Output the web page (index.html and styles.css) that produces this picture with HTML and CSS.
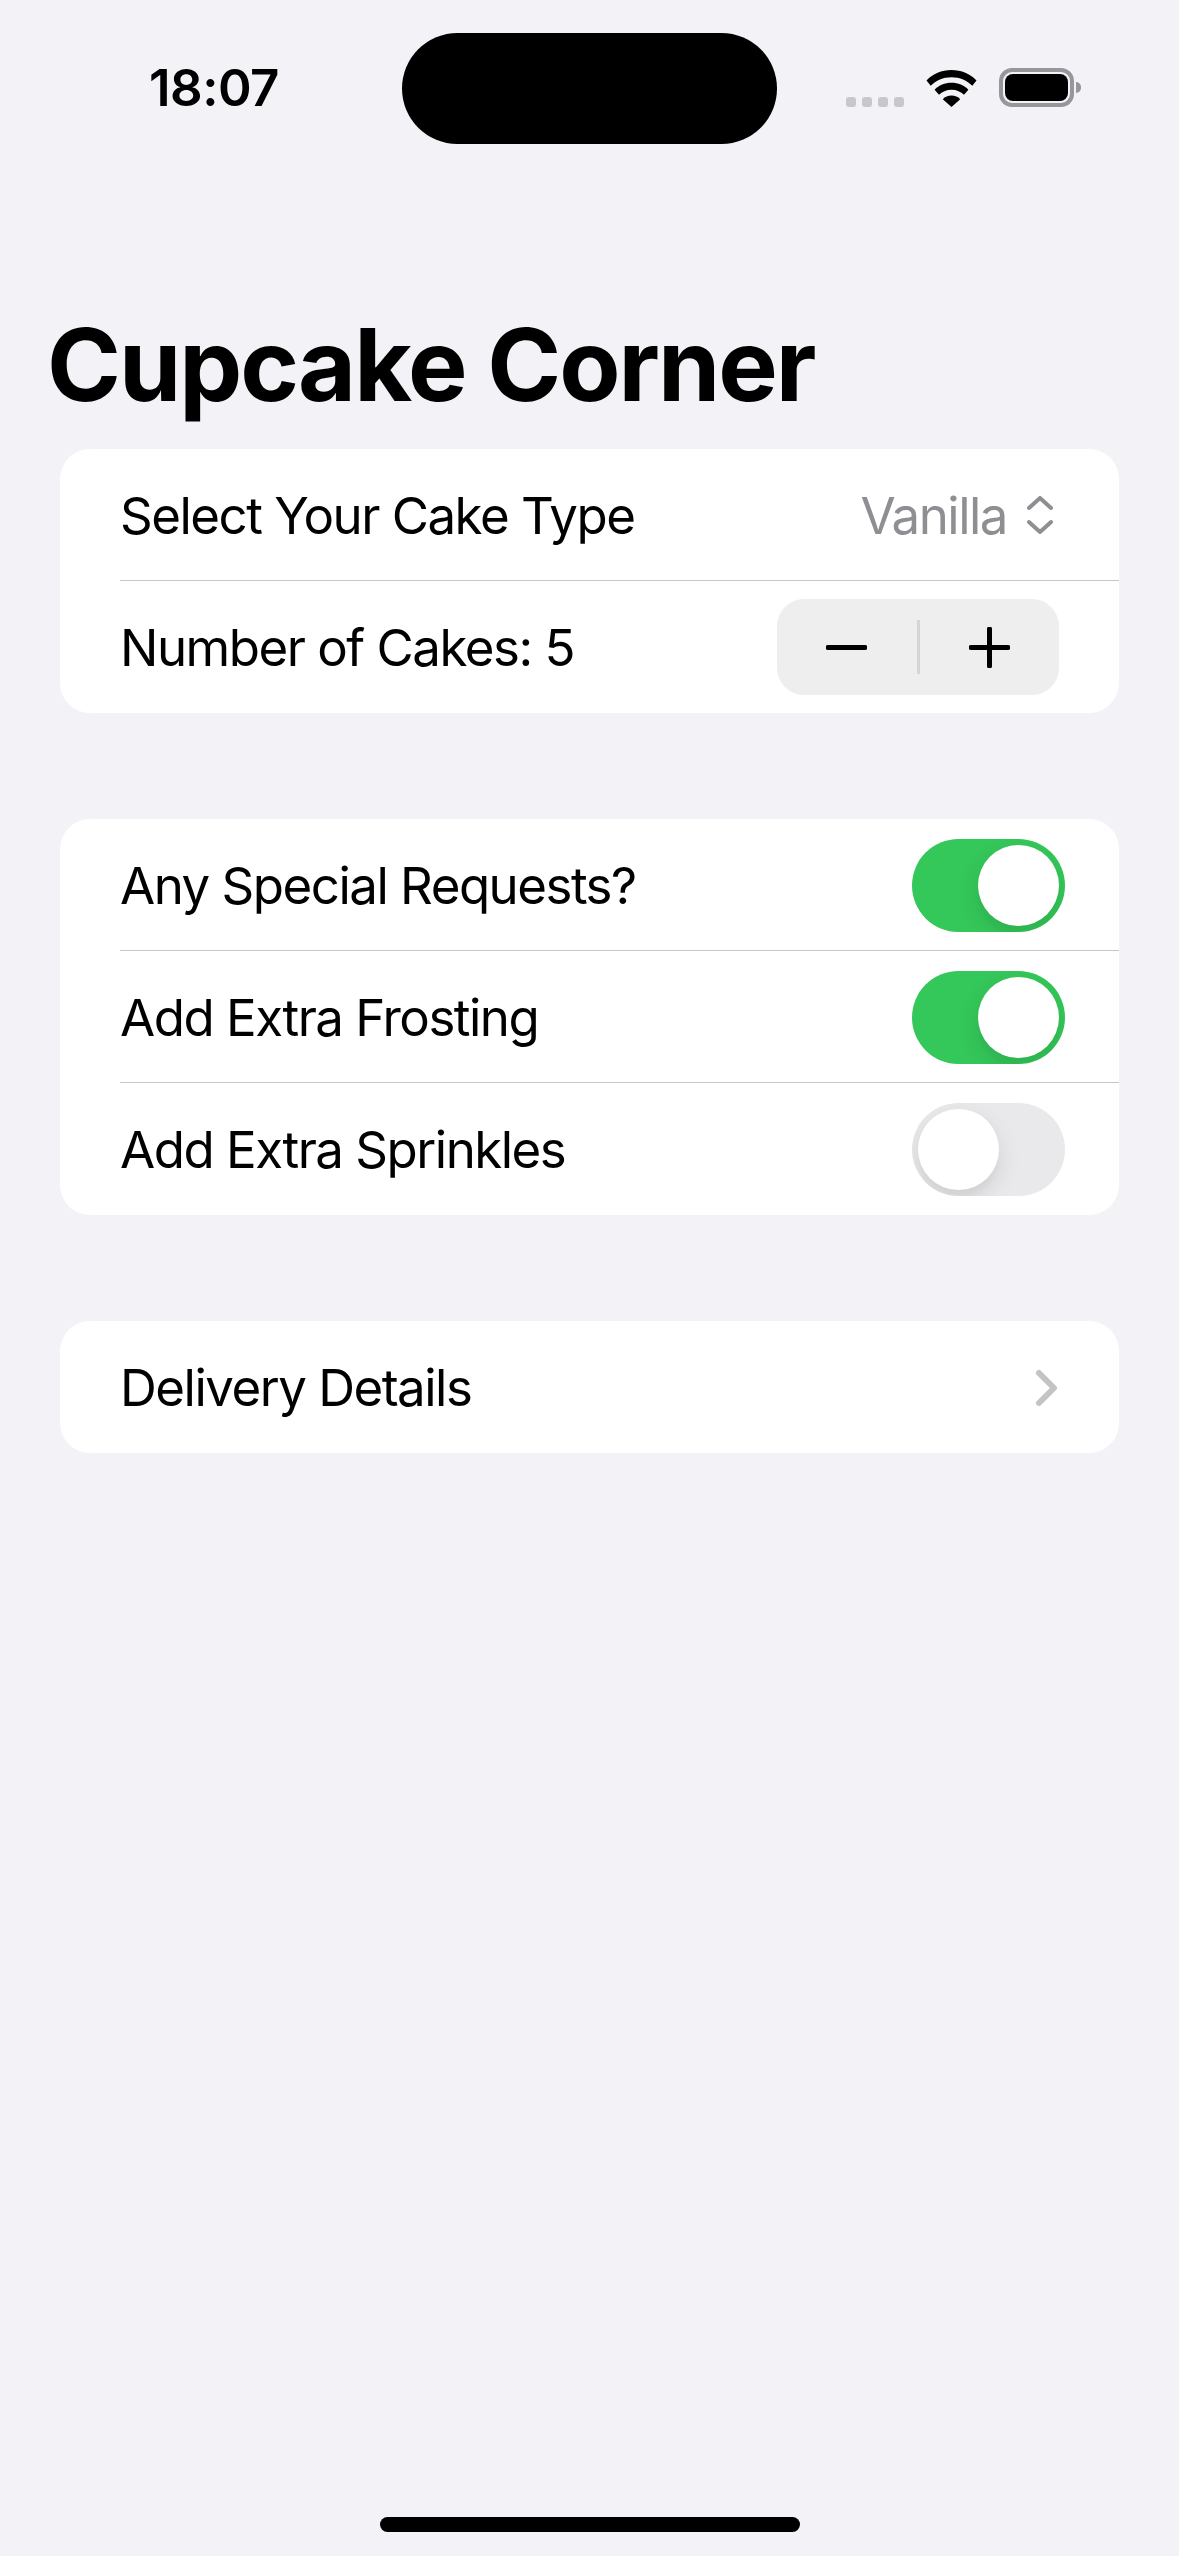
FILE: index.html
```html
<!DOCTYPE html>
<html lang="en">
<head>
<meta charset="utf-8">
<title>Cupcake Corner</title>
<link rel="stylesheet" href="styles.css">
</head>
<body>
<div class="screen">
  <div class="island"></div>
  <header class="status">
    <span class="time">18:07</span>
    <div class="status-icons">
      <div class="signal"><i></i><i></i><i></i><i></i></div>
      <svg class="wifi" viewBox="0 0 51 38" width="51" height="38">
        <path d="M0.500 11.500C7 4.800 15.500 1 25.500 1S44 4.800 50.500 11.500L46.300 16.800C41 11.400 34 8.200 25.500 8.200S10 11.400 4.700 16.800Z"/>
        <path d="M8.600 20.700C12.900 16.400 18.800 13.800 25.500 13.800S38.100 16.400 42.400 20.700L38 25.800C35 22.800 30.600 20.800 25.500 20.800S16 22.800 13 25.800Z"/>
        <path d="M16.800 30.200C19 28 22 26.600 25.500 26.600S32 28 34.200 30.200L25.500 38Z"/>
      </svg>
      <div class="battery"><div class="battery-fill"></div></div>
    </div>
  </header>

  <h1 class="title">Cupcake Corner</h1>

  <section class="card">
    <div class="row">
      <span>Select Your Cake Type</span>
      <div class="picker">
        <span class="picker-value">Vanilla</span>
        <svg class="updown" viewBox="0 0 26 38" width="26" height="38">
          <path d="M2 12L13 2L24 12M2 26L13 36L24 26"/>
        </svg>
      </div>
    </div>
    <div class="row">
      <span>Number of Cakes: 5</span>
      <div class="stepper">
        <svg class="step-icon" viewBox="0 0 41 41" width="41" height="41"><path d="M2 20.500H39"/></svg>
        <div class="step-divider"></div>
        <svg class="step-icon" viewBox="0 0 41 41" width="41" height="41"><path d="M2 20.500H39M20.500 2V39"/></svg>
      </div>
    </div>
  </section>

  <section class="card">
    <div class="row">
      <span>Any Special Requests?</span>
      <div class="toggle on"><div class="knob"></div></div>
    </div>
    <div class="row">
      <span>Add Extra Frosting</span>
      <div class="toggle on"><div class="knob"></div></div>
    </div>
    <div class="row">
      <span>Add Extra Sprinkles</span>
      <div class="toggle"><div class="knob"></div></div>
    </div>
  </section>

  <section class="card">
    <div class="row">
      <span>Delivery Details</span>
      <svg class="chevron" viewBox="0 0 23 38" width="23" height="38"><path d="M4 4L19 19L4 34"/></svg>
    </div>
  </section>

  <div class="home-indicator"></div>
</div>
</body>
</html>
```
FILE: styles.css
```css
* { box-sizing: border-box; }
html, body { margin: 0; padding: 0; }
body {
  background: #f2f2f7;
  font-family: Inter, "Liberation Sans", sans-serif;
  color: #000;
}
.screen {
  position: relative;
  width: 1179px;
  height: 2556px;
  overflow: hidden;
  display: flex;
  flex-direction: column;
  padding: 0 60px;
}
.island {
  position: absolute;
  left: 402px;
  top: 33px;
  width: 375px;
  height: 111px;
  border-radius: 56px;
  background: #000;
}
.status {
  height: 144px;
  margin: 0 -60px;
  padding: 68px 105px 0 149px;
  display: flex;
  justify-content: space-between;
  align-items: flex-start;
}
.time {
  font-size: 51px;
  line-height: 40px;
  font-weight: 600;
  letter-spacing: -0.5px;
}
.status-icons {
  display: flex;
  align-items: flex-end;
  height: 39px;
}
.signal {
  display: flex;
  gap: 6px;
  margin-right: 22px;
}
.signal i {
  width: 10px;
  height: 10px;
  border-radius: 3px;
  background: #c7c7cc;
}
.wifi { fill: #000; margin-right: 22px; }
.battery {
  position: relative;
  width: 75px;
  height: 39px;
  border: 4px solid #97979b;
  border-radius: 13px;
  padding: 2px;
}
.battery::after {
  content: "";
  position: absolute;
  left: 73px;
  top: 10px;
  width: 5px;
  height: 11px;
  border-radius: 0 6px 6px 0;
  background: #97979b;
}
.battery-fill {
  height: 100%;
  border-radius: 8px;
  background: #000;
}
.title {
  margin: 161px 0 0 -13px;
  height: 144px;
  font-size: 100px;
  line-height: 120px;
  font-weight: 700;
  letter-spacing: -2px;
}
.card {
  background: #fff;
  border-radius: 30px;
  padding-left: 60px;
  margin-bottom: 106px;
}
.row {
  height: 132px;
  display: flex;
  justify-content: space-between;
  align-items: center;
  padding-top: 1px;
  padding-right: 54px;
  font-size: 51px;
  letter-spacing: -1.5px;
  border-bottom: 1px solid #c6c6c8;
}
.row:last-child { border-bottom: 0; }
.picker {
  display: flex;
  align-items: center;
  gap: 20px;
  margin-right: 12px;
  color: #8e8e93;
}
.updown { fill: none; stroke: #8e8e93; stroke-width: 4; stroke-linecap: round; stroke-linejoin: round; }
.stepper {
  width: 282px;
  height: 96px;
  margin-right: 6px;
  margin-top: -1px;
  display: flex;
  align-items: center;
  justify-content: space-between;
  padding: 0 49px;
  border-radius: 27px;
  background: #eeeeef;
}
.step-icon { fill: none; stroke: #000; stroke-width: 5; stroke-linecap: round; }
.step-divider { width: 3px; height: 54px; background: #d5d5d7; }
.toggle {
  width: 153px;
  height: 93px;
  padding: 6px;
  display: flex;
  overflow: hidden;
  border-radius: 47px;
  background: #e9e9eb;
}
.toggle.on { background: #34c759; justify-content: flex-end; }
.knob {
  width: 81px;
  height: 81px;
  border-radius: 50%;
  background: #fff;
  box-shadow: 0 9px 24px rgba(0, 0, 0, .1), 0 9px 3px rgba(0, 0, 0, .02);
}
.chevron { fill: none; stroke: #c4c4c6; stroke-width: 6; stroke-linecap: round; stroke-linejoin: round; margin-right: 7px; }
.home-indicator {
  position: absolute;
  left: 380px;
  top: 2517px;
  width: 420px;
  height: 15px;
  border-radius: 8px;
  background: #000;
}
```
